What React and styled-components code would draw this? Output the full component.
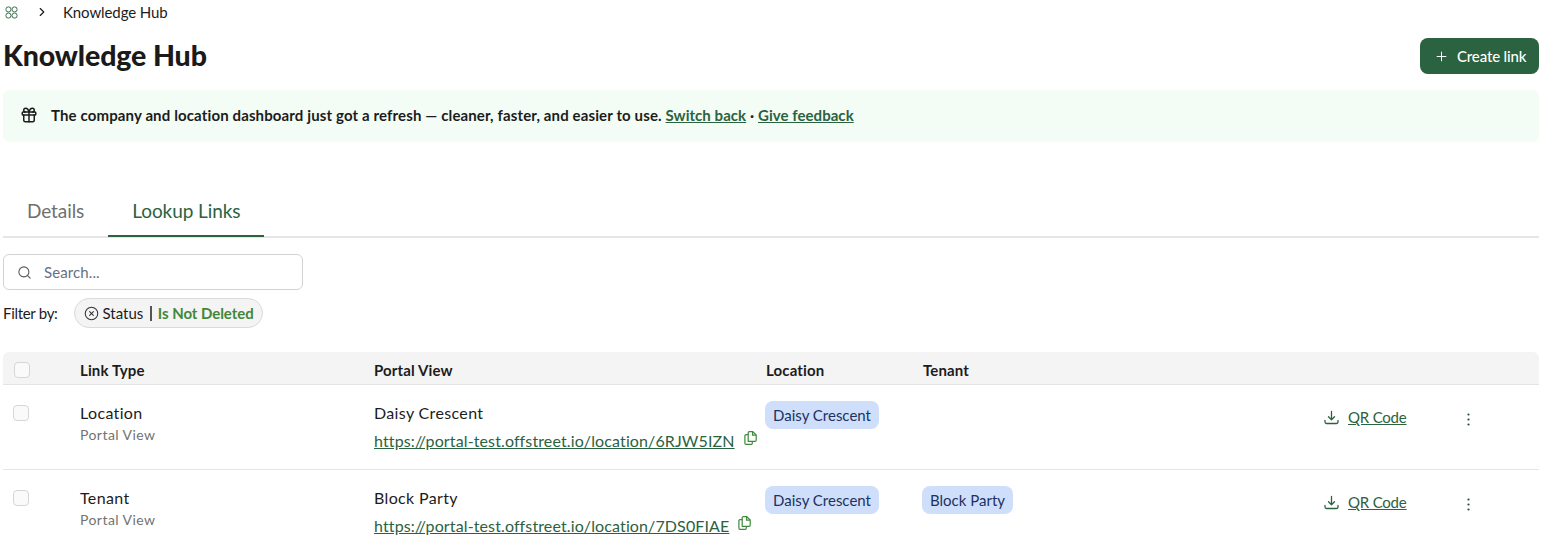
import styled, { createGlobalStyle } from "styled-components";
import { ChevronRight, CircleX, Gift, Plus, Search } from "lucide-react";

const GlobalStyle = createGlobalStyle`
  html, body {
    margin: 0;
    background: #fff;
    color: #1c1c1c;
    font-family: "Lato", "Noto Sans", sans-serif;
  }
  * { box-sizing: border-box; }
`;

const Page = styled.div`
  width: 1545px;
  height: 543px;
  overflow: hidden;
  padding: 0 6px 0 3px;
`;

const Breadcrumb = styled.nav`
  display: flex;
  align-items: center;
  height: 24px;
  font-size: 15px;
  letter-spacing: -0.1px;
  color: #1c1c1c;
`;

const CrumbIcon = styled.svg`
  width: 13px;
  height: 13px;
  margin-left: 2px;
  color: #2b6240;
`;

const CrumbSep = styled(ChevronRight)`
  width: 14px;
  height: 14px;
  margin: 0 14px 0 17px;
  stroke-width: 2;
`;

const TitleRow = styled.header`
  display: flex;
  align-items: center;
  justify-content: space-between;
  height: 36px;
  margin-top: 14px;
`;

const Title = styled.h1`
  margin: 0 0 3px;
  font-size: 28.5px;
  font-weight: 900;
  letter-spacing: -0.1px;
  color: #1a1a1a;
`;

const CreateButton = styled.button`
  display: flex;
  align-items: center;
  gap: 8px;
  width: 119px;
  height: 36px;
  padding: 0 0 0 14px;
  border: none;
  border-radius: 8px;
  background: #2b6240;
  color: #fff;
  font: 500 15px "Lato", sans-serif;
  letter-spacing: -0.15px;
  svg { width: 15px; height: 15px; stroke-width: 1.6; }
`;

const Banner = styled.div`
  display: flex;
  align-items: center;
  gap: 13px;
  height: 52px;
  margin-top: 16px;
  padding: 0 0 2px 17px;
  border-radius: 6px;
  background: #f3fdf5;
  font-size: 15px;
  font-weight: 700;
  letter-spacing: 0.13px;
  svg { width: 18px; height: 18px; stroke-width: 2; flex-shrink: 0; }
`;

const BannerLink = styled.a`
  color: #2b6240;
  letter-spacing: 0.05px;
  text-decoration: underline;
`;

const Tabs = styled.div`
  display: flex;
  height: 48px;
  margin-top: 48px;
  border-bottom: 2px solid #e6e6e8;
`;

const Tab = styled.div`
  display: flex;
  align-items: center;
  height: 47px;
  padding: 0 24px 4px;
  font-size: 19px;
  letter-spacing: -0.08px;
  color: ${(p) => (p.$active ? "#2b6240" : "#6f6f6f")};
  border-bottom: 2px solid ${(p) => (p.$active ? "#2b6240" : "transparent")};
`;

const SearchBox = styled.div`
  display: flex;
  align-items: center;
  gap: 12px;
  width: 300px;
  height: 36px;
  margin-top: 16px;
  padding-left: 13px;
  border: 1px solid #d2d2d4;
  border-radius: 6px;
  font-size: 15px;
  letter-spacing: 0.1px;
  color: #667085;
  svg { width: 15px; height: 15px; color: #555; stroke-width: 1.7; }
`;

const FilterRow = styled.div`
  display: flex;
  align-items: center;
  gap: 16px;
  height: 30px;
  margin-top: 8px;
  font-size: 15px;
`;

const FilterLabel = styled.span`
  letter-spacing: -0.3px;
`;

const FilterChip = styled.div`
  display: flex;
  align-items: center;
  height: 30px;
  padding: 0 8px 0 9px;
  border: 1px solid #dadada;
  border-radius: 15px;
  background: #f4f4f4;
  svg { width: 15px; height: 15px; margin-right: 4px; color: #333; stroke-width: 1.7; }
`;

const ChipDivider = styled.span`
  width: 1.5px;
  height: 15px;
  margin: 0 6px 0 7px;
  background: #555;
`;

const ChipValue = styled.span`
  font-weight: 700;
  letter-spacing: -0.05px;
  color: #438739;
`;

const TableGrid = styled.div`
  display: grid;
  grid-template-columns: 77px 294px 392px 157px 401px 1fr;
  align-items: start;
`;

const HeadRow = styled(TableGrid)`
  align-items: center;
  height: 33px;
  margin-top: 24px;
  padding-top: 3px;
  border-radius: 6px 6px 0 0;
  border-bottom: 1px solid #e4e4e4;
  background: #f4f4f4;
  font-size: 15px;
  font-weight: 700;
  letter-spacing: 0.13px;
`;

const Row = styled(TableGrid)`
  height: 85px;
  padding-top: 16px;
  border-bottom: 1px solid #e6e6e6;
  &:last-child { border-bottom: none; }
`;

const Check = styled.span`
  display: block;
  width: 16px;
  height: 16px;
  margin: ${(p) => (p.$head ? "0 0 0 11px" : "4px 0 0 10px")};
  border: 1px solid #d6d6d6;
  border-radius: 4px;
  background: #fafafa;
`;

const Primary = styled.div`
  font-size: 16px;
  line-height: 24px;
  letter-spacing: 0.35px;
  color: #1c1c1c;
`;

const Secondary = styled.div`
  margin-top: 1px;
  font-size: 14px;
  line-height: 18px;
  letter-spacing: 0.45px;
  color: #737373;
`;

const UrlLine = styled.div`
  display: flex;
  align-items: flex-start;
  gap: 9px;
  margin-top: 4px;
`;

const Url = styled.a`
  font-size: 16px;
  line-height: 24px;
  letter-spacing: 0.12px;
  color: #2b6240;
  text-decoration: underline;
`;

const CopyIcon = styled.svg`
  width: 13px;
  height: 14px;
  margin-top: 2px;
  color: #3f8a3c;
`;

const Pill = styled.span`
  display: inline-flex;
  align-items: center;
  height: 28px;
  margin-left: -1px;
  padding: 0 8px;
  border-radius: 8px;
  background: #cfdffb;
  color: #1c3260;
  font-size: 15px;
`;

const Actions = styled.div`
  display: flex;
  align-items: center;
  height: 36px;
`;

const QrLink = styled.a`
  display: flex;
  align-items: center;
  gap: 9px;
  width: 143px;
  padding-bottom: 4px;
  font-size: 15px;
  letter-spacing: -0.2px;
  color: #2b6240;
  span { text-decoration: underline; }
`;

const DownloadIcon = styled.svg`
  width: 15px;
  height: 15px;
`;

const Dots = styled.svg`
  width: 3px;
  height: 13px;
  color: #24503a;
`;

const GridIcon = () => (
  <CrumbIcon viewBox="0 0 14 14" fill="none" stroke="currentColor" strokeWidth="1">
    <rect x="1" y="1" width="5.4" height="5.4" rx="2.5" />
    <rect x="7.6" y="1" width="5.4" height="5.4" rx="2.5" />
    <rect x="1" y="7.6" width="5.4" height="5.4" rx="2.5" />
    <rect x="7.6" y="7.6" width="5.4" height="5.4" rx="2.5" />
  </CrumbIcon>
);

const Copy = () => (
  <CopyIcon viewBox="0 0 13 14" fill="none" stroke="currentColor" strokeWidth="1.2" strokeLinejoin="round">
    <path d="M4.2 10.4V1.7a1.1 1.1 0 0 1 1.1-1.1h3.5L12.2 4v5.3a1.1 1.1 0 0 1-1.1 1.1z" />
    <path d="M8.6.8v3.4h3.4" />
    <path d="M4.2 3.6H2a1.1 1.1 0 0 0-1.1 1.1v7.6A1.1 1.1 0 0 0 2 13.4h5.2a1.1 1.1 0 0 0 1.1-1.1v-1.9" />
  </CopyIcon>
);

const rows = [
  { type: "Location", name: "Daisy Crescent", url: "https://portal-test.offstreet.io/location/6RJW5IZN", location: "Daisy Crescent" },
  { type: "Tenant", name: "Block Party", url: "https://portal-test.offstreet.io/location/7DS0FIAE", location: "Daisy Crescent", tenant: "Block Party" },
];

const App = () => (
  <Page>
    <GlobalStyle />
    <Breadcrumb>
      <GridIcon />
      <CrumbSep />
      Knowledge Hub
    </Breadcrumb>
    <TitleRow>
      <Title>Knowledge Hub</Title>
      <CreateButton type="button">
        <Plus />
        Create link
      </CreateButton>
    </TitleRow>
    <Banner>
      <Gift />
      <span>
        The company and location dashboard just got a refresh — cleaner, faster, and easier to use.{" "}
        <BannerLink>Switch back</BannerLink> · <BannerLink>Give feedback</BannerLink>
      </span>
    </Banner>
    <Tabs>
      <Tab>Details</Tab>
      <Tab $active>Lookup Links</Tab>
    </Tabs>
    <SearchBox>
      <Search />
      Search...
    </SearchBox>
    <FilterRow>
      <FilterLabel>Filter by:</FilterLabel>
      <FilterChip>
        <CircleX />
        Status
        <ChipDivider />
        <ChipValue>Is Not Deleted</ChipValue>
      </FilterChip>
    </FilterRow>
    <HeadRow>
      <Check $head />
      <span>Link Type</span>
      <span>Portal View</span>
      <span>Location</span>
      <span>Tenant</span>
    </HeadRow>
    {rows.map((row) => (
      <Row key={row.url}>
        <Check />
        <div>
          <Primary>{row.type}</Primary>
          <Secondary>Portal View</Secondary>
        </div>
        <div>
          <Primary>{row.name}</Primary>
          <UrlLine>
            <Url>{row.url}</Url>
            <Copy />
          </UrlLine>
        </div>
        <div>
          <Pill>{row.location}</Pill>
        </div>
        <div>{row.tenant && <Pill>{row.tenant}</Pill>}</div>
        <Actions>
          <QrLink>
            <DownloadIcon viewBox="0 0 15 15" fill="none" stroke="currentColor" strokeWidth="1.3" strokeLinecap="round" strokeLinejoin="round">
              <path d="M7.5 1.5v8M4.5 6.8l3 3 3-3M1 10.5v1.5a1.5 1.5 0 0 0 1.5 1.5h10a1.5 1.5 0 0 0 1.5-1.5v-1.5" />
            </DownloadIcon>
            <span>QR Code</span>
          </QrLink>
          <Dots viewBox="0 0 3 13" fill="currentColor">
            <circle cx="1.5" cy="1.5" r="1.1" />
            <circle cx="1.5" cy="6.5" r="1.1" />
            <circle cx="1.5" cy="11.5" r="1.1" />
          </Dots>
        </Actions>
      </Row>
    ))}
  </Page>
);

export default App;
